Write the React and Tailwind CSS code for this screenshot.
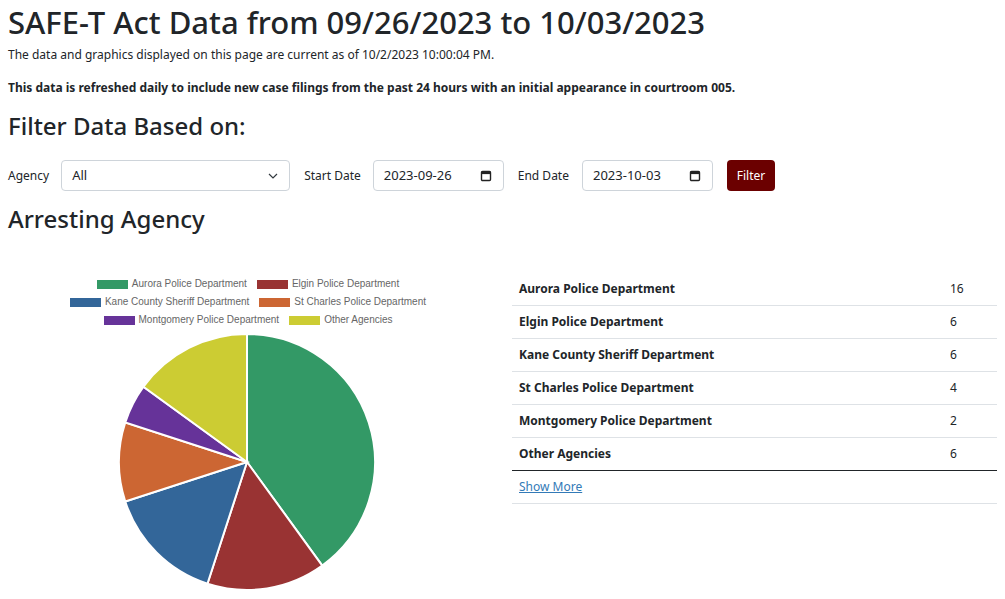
import React from 'react';

const AGENCIES = [
  { name: 'Aurora Police Department', count: 16, color: '#339966' },
  { name: 'Elgin Police Department', count: 6, color: '#993333' },
  { name: 'Kane County Sheriff Department', count: 6, color: '#336699' },
  { name: 'St Charles Police Department', count: 4, color: '#cc6633' },
  { name: 'Montgomery Police Department', count: 2, color: '#663399' },
  { name: 'Other Agencies', count: 6, color: '#cccc33' },
];

const LEGEND_ROWS = [[0, 1], [2, 3], [4, 5]];

function Pie({ cx, cy, r }) {
  const total = AGENCIES.reduce((s, a) => s + a.count, 0);
  let angle = -Math.PI / 2;
  const point = (a) => [cx + r * Math.cos(a), cy + r * Math.sin(a)];
  return (
    <svg width="496" height="262" className="block">
      {AGENCIES.map((a) => {
        const sweep = (a.count / total) * Math.PI * 2;
        const [x1, y1] = point(angle);
        const [x2, y2] = point(angle + sweep);
        angle += sweep;
        const large = sweep > Math.PI ? 1 : 0;
        return (
          <path
            key={a.name}
            d={`M${cx},${cy} L${x1},${y1} A${r},${r} 0 ${large} 1 ${x2},${y2} Z`}
            fill={a.color}
            stroke="#fff"
            strokeWidth="2"
          />
        );
      })}
    </svg>
  );
}

function CalendarIcon() {
  return (
    <svg width="12" height="12" viewBox="0 0 12 12" className="shrink-0">
      <rect x="1.5" y="1.5" width="9" height="9" rx="1" fill="none" stroke="#222" strokeWidth="1.4" />
      <rect x="1.5" y="1.5" width="9" height="2.6" fill="#222" />
    </svg>
  );
}

function DateBox({ value }) {
  return (
    <div className="w-[131px] h-[31px] border border-[#ced4da] rounded-[4px] bg-white flex items-center justify-between pl-[10px] pr-[11px] text-[13px] text-[#212529]">
      <span>{value}</span>
      <CalendarIcon />
    </div>
  );
}

export default function App() {
  return (
    <div className="bg-white text-[#212529] px-[8px] min-h-[599px]" style={{ fontFamily: '"Noto Sans", "Open Sans", sans-serif' }}>
      <h1 className="text-[31px] leading-[44px] font-medium">SAFE-T Act Data from 09/26/2023 to 10/03/2023</h1>
      <p className="text-[12px] mt-[2px] leading-[18px]">The data and graphics displayed on this page are current as of 10/2/2023 10:00:04 PM.</p>
      <p className="text-[12px] font-bold mt-[15px] leading-[18px]">This data is refreshed daily to include new case filings from the past 24 hours with an initial appearance in courtroom 005.</p>

      <h3 className="text-[24px] leading-[32px] font-medium mt-[13px]">Filter Data Based on:</h3>

      <div className="flex items-center mt-[18px] text-[12px]">
        <span className="mr-[12px]">Agency</span>
        <div className="w-[229px] h-[31px] border border-[#ced4da] rounded-[4px] bg-white flex items-center justify-between pl-[10px] pr-[11px] text-[13px]">
          <span>All</span>
          <svg width="10" height="6" viewBox="0 0 10 6">
            <path d="M1 1 L5 5 L9 1" fill="none" stroke="#343a40" strokeWidth="1.2" />
          </svg>
        </div>
        <span className="ml-[14px] mr-[12px]">Start Date</span>
        <DateBox value="2023-09-26" />
        <span className="ml-[14px] mr-[13px]">End Date</span>
        <DateBox value="2023-10-03" />
        <button className="ml-[14px] h-[31px] w-[48px] rounded-[4px] bg-[#6b0000] text-white text-[12px]">Filter</button>
      </div>

      <h3 className="text-[24px] leading-[32px] font-medium mt-[12px]">Arresting Agency</h3>

      <div className="flex mt-[36px]">
        <div className="w-[496px] -ml-[8px] shrink-0">
          <div className="pt-[7px] flex flex-col items-center gap-[6px] text-[10px] leading-[12px] text-[#666]" style={{ fontFamily: '"Liberation Sans", Arial, sans-serif' }}>
            {LEGEND_ROWS.map((row, i) => (
              <div key={i} className="flex items-center gap-[10px]">
                {row.map((idx) => (
                  <div key={idx} className="flex items-center gap-[4px]">
                    <span className="inline-block w-[31px] h-[9px]" style={{ backgroundColor: AGENCIES[idx].color }} />
                    <span>{AGENCIES[idx].name}</span>
                  </div>
                ))}
              </div>
            ))}
          </div>
          <div className="mt-[6px]">
            <Pie cx={247} cy={130} r={128} />
          </div>
        </div>

        <div className="ml-[16px] mt-[2px] w-[485px] text-[12px]">
          {AGENCIES.map((a, i) => (
            <div
              key={a.name}
              className={`flex h-[33px] items-center ${i === AGENCIES.length - 1 ? 'border-b border-[#212529]' : 'border-b border-[#dee2e6]'}`}
            >
              <span className="font-bold pl-[7px] w-[438px]">{a.name}</span>
              <span>{a.count}</span>
            </div>
          ))}
          <div className="h-[33px] flex items-center border-b border-[#dee2e6] pl-[7px]">
            <a href="#" className="text-[#337ab7] underline">Show More</a>
          </div>
        </div>
      </div>
    </div>
  );
}
